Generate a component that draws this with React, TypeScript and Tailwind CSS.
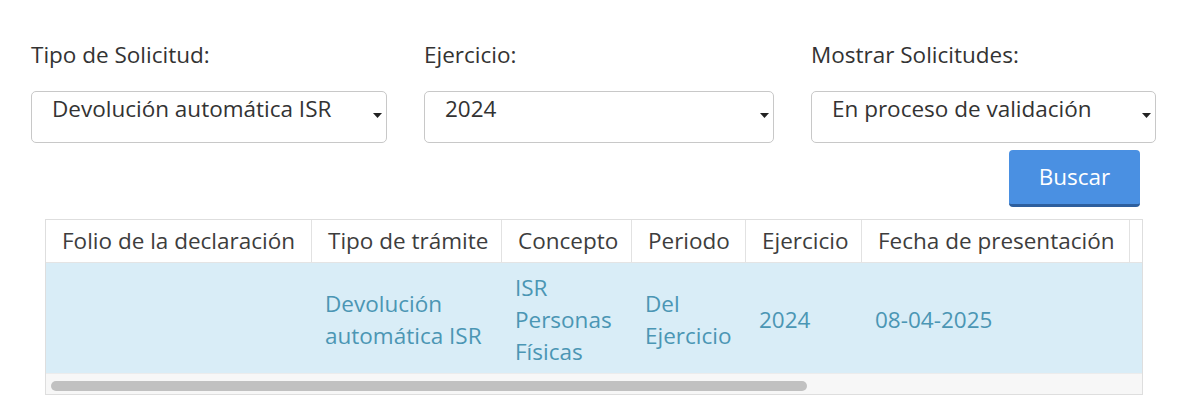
import React from 'react';

const font = { fontFamily: '"Open Sans", "Noto Sans", sans-serif' };

function Caret() {
  return (
    <svg className="absolute right-[4px] top-[21px]" width="9" height="5" viewBox="0 0 9 5">
      <path d="M0 0 L9 0 L4.5 5 Z" fill="#222" />
    </svg>
  );
}

function SelectBox({ label, value, width }: { label: string; value: string; width: string }) {
  return (
    <div className={width}>
      <div className="text-[22.5px] leading-[28px] text-[#333] h-[28px] mb-[22px]">{label}</div>
      <div className="relative h-[52px] border border-[#c8c8c8] rounded-[5px] bg-white">
        <div className="pl-[20px] pt-[3px] text-[22.5px] leading-[28px] text-[#333] whitespace-nowrap">{value}</div>
        <Caret />
      </div>
    </div>
  );
}

const headers = [
  { title: 'Folio de la declaración', w: 'w-[266px]' },
  { title: 'Tipo de trámite', w: 'w-[190px]' },
  { title: 'Concepto', w: 'w-[130px]' },
  { title: 'Periodo', w: 'w-[114px]' },
  { title: 'Ejercicio', w: 'w-[116px]' },
  { title: 'Fecha de presentación', w: 'w-[268px]' },
  { title: '', w: 'w-[200px]' },
];

const row: React.ReactNode[] = [
  '',
  <>Devolución<br />automática ISR</>,
  <>ISR<br />Personas<br />Físicas</>,
  <>Del<br />Ejercicio</>,
  '2024',
  '08-04-2025',
  '',
];

export default function App() {
  return (
    <div className="w-[1200px] h-[420px] bg-white overflow-hidden" style={font}>
      <div className="pt-[41px] pl-[31px] flex gap-[37px]">
        <SelectBox label="Tipo de Solicitud:" value="Devolución automática ISR" width="w-[356px]" />
        <SelectBox label="Ejercicio:" value="2024" width="w-[350px]" />
        <SelectBox label="Mostrar Solicitudes:" value="En proceso de validación" width="w-[345px]" />
      </div>

      <div className="flex justify-end pr-[60px] mt-[7px]">
        <button className="w-[131px] h-[57px] rounded-[4px] bg-[#4a90e2] border-b-[3px] border-[#2d5f9e] text-white text-[22.5px] leading-[28px]">
          Buscar
        </button>
      </div>

      <div className="ml-[45px] mt-[12px] w-[1098px] border border-[#dedede] overflow-hidden">
        <div className="w-[1600px]">
          <div className="flex h-[43px] bg-white border-b border-[#e4e4e4]">
            {headers.map((h, i) => (
              <div
                key={i}
                className={`${h.w} shrink-0 px-[16px] flex items-center text-[22.5px] leading-[28px] text-[#3d3d3d] whitespace-nowrap border-r border-[#e2e2e2]`}
              >
                {h.title}
              </div>
            ))}
          </div>
          <div className="flex h-[110px] bg-[#d9edf7]">
            {headers.map((h, i) => (
              <div
                key={i}
                className={`${h.w} shrink-0 pl-[13px] pr-[14px] pt-[3px] flex items-center text-[22.5px] leading-[32px] text-[#4b96b4] whitespace-nowrap`}
              >
                <div>{row[i]}</div>
              </div>
            ))}
          </div>
        </div>
        <div className="h-[21px] bg-[#f7f7f7] border-t border-[#ececec] px-[5px] pt-[7px]">
          <div className="w-[756px] h-[10px] rounded-full bg-[#c1c1c1]" />
        </div>
      </div>
    </div>
  );
}
